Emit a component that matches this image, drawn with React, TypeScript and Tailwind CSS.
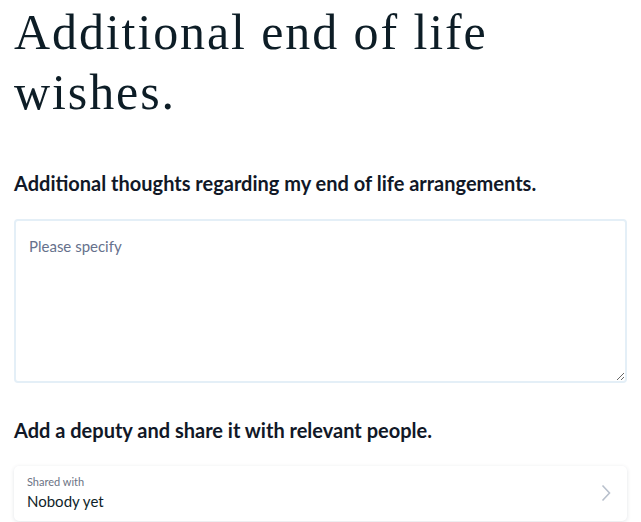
import React from 'react';

export default function App() {
  return (
    <div className="min-h-screen bg-white px-[14px] pt-[2px] text-[#0f1f2a]" style={{ fontFamily: 'Lato, sans-serif' }}>
      <h1
        className="text-[50px] leading-[60px] font-normal tracking-[1.9px] text-[#0d1d26] pr-[100px]"
        style={{ fontFamily: '"Liberation Serif", serif' }}
      >
        Additional end of life wishes.
      </h1>

      <h2 className="mt-[47px] text-[20px] font-bold leading-[28px] text-[#111827]">
        Additional thoughts regarding my end of life arrangements.
      </h2>

      <textarea
        className="mt-[22px] block h-[164px] w-full resize-y rounded-[4px] border-2 border-[#e4eff7] px-[13px] pt-[14px] pb-[12px] text-[15px] text-[#111827] outline-none placeholder:text-[#66718c]"
        placeholder="Please specify"
      />

      <h2 className="mt-[33px] text-[20px] font-bold leading-[28px] text-[#111827]">
        Add a deputy and share it with relevant people.
      </h2>

      <div className="mt-[22px] flex items-center justify-between rounded-[5px] bg-white pt-[9px] pb-[10px] pl-[13px] pr-[16px] shadow-[0_1px_4px_rgba(15,30,60,0.12)]">
        <div className="flex flex-col">
          <span className="text-[11px] leading-[14px] text-[#6b7384]">Shared with</span>
          <span className="mt-[2px] text-[15px] leading-[20px] text-[#0f1f2a]">Nobody yet</span>
        </div>
        <svg width="10" height="18" viewBox="0 0 10 18" fill="none">
          <path d="M1.5 1.5 L8.5 9 L1.5 16.5" stroke="#b8c0cc" strokeWidth="1.6" />
        </svg>
      </div>
    </div>
  );
}
